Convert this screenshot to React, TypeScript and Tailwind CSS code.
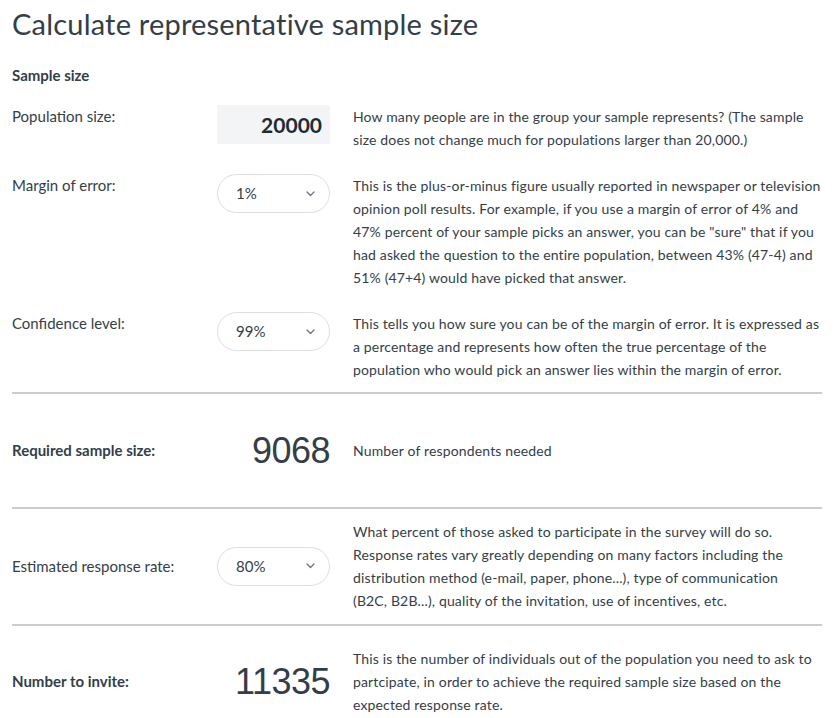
import React from "react";

const font = { fontFamily: "Lato, 'Noto Sans', sans-serif" };

function Chevron() {
    return (
        <svg width="9" height="6" viewBox="0 0 9 6" fill="none" className="text-[#6b7480]">
            <path d="M1 1l3.5 3.5L8 1" stroke="currentColor" strokeWidth="1.3" strokeLinecap="round" strokeLinejoin="round" />
        </svg>
    );
}

function Select({ value }: { value: string }) {
    return (
        <div className="flex h-[39px] w-[113px] items-center justify-between rounded-full border border-[#dedede] bg-white pl-[18px] pr-[14px] text-[15px] text-[#333e48]">
            <span>{value}</span>
            <Chevron />
        </div>
    );
}

function Row({
    label,
    control,
    children,
    bold = false,
    className = "",
}: {
    label: string;
    control: React.ReactNode;
    children: React.ReactNode;
    bold?: boolean;
    className?: string;
}) {
    return (
        <div className={"grid grid-cols-[182px_113px_1fr] gap-x-[23px] " + className}>
            <div className={"text-[15px] leading-[23px] " + (bold ? "font-bold" : "")}>{label}</div>
            <div className="flex justify-end">{control}</div>
            <div className="text-[14px] leading-[23px] tracking-[0.15px]">{children}</div>
        </div>
    );
}

function BigNumber({ value }: { value: string }) {
    return (
        <div
            className="text-[36px] leading-none tracking-[-0.5px] text-[#333e48]"
            style={{ fontFamily: "'Liberation Sans', Arial, sans-serif" }}
        >
            {value}
        </div>
    );
}

export default function App() {
    return (
        <div className="min-h-[718px] bg-white pl-3 pr-4 text-[#333e48]" style={font}>
            <h1 className="pt-[6px] text-[29px] font-normal leading-[36px] tracking-[0.2px]">
                Calculate representative sample size
            </h1>
            <h2 className="mt-[22px] text-[15px] font-bold leading-[23px]">Sample size</h2>

            <div className="mt-[18px] flex flex-col gap-[23px]">
                <Row
                    label="Population size:"
                    control={
                        <div className="flex h-[39px] w-[113px] items-center justify-end rounded-[2px] bg-[#f3f4f6] pr-[8px] text-[21px] font-bold text-[#1f2a33]">
                            20000
                        </div>
                    }
                >
                    How many people are in the group your sample represents? (The sample size does not change much for
                    populations larger than 20,000.)
                </Row>
                <Row label="Margin of error:" control={<Select value="1%" />}>
                    This is the plus-or-minus figure usually reported in newspaper or television opinion poll results. For
                    example, if you use a margin of error of 4% and 47% percent of your sample picks an answer, you can be
                    "sure" that if you had asked the question to the entire population, between 43% (47-4) and 51% (47+4)
                    would have picked that answer.
                </Row>
                <Row label="Confidence level:" control={<Select value="99%" />}>
                    This tells you how sure you can be of the margin of error. It is expressed as a percentage and represents
                    how often the true percentage of the population who would pick an answer lies within the margin of error.
                </Row>
            </div>

            <div className="mt-[11px] h-[2px] bg-[#cccccc]" />

            <Row
                label="Required sample size:"
                bold
                control={<BigNumber value="9068" />}
                className="h-[113px] items-center"
            >
                Number of respondents needed
            </Row>

            <div className="h-[2px] bg-[#cccccc]" />

            <Row
                label="Estimated response rate:"
                control={<Select value="80%" />}
                className="items-center pb-[12px] pt-[11px]"
            >
                What percent of those asked to participate in the survey will do so. Response rates vary greatly depending
                on many factors including the distribution method (e-mail, paper, phone...), type of communication
                <br />
                (B2C, B2B...), quality of the invitation, use of incentives, etc.
            </Row>

            <div className="h-[2px] bg-[#cccccc]" />

            <Row label="Number to invite:" bold control={<BigNumber value="11335" />} className="items-center pt-[21px]">
                This is the number of individuals out of the population you need to ask to partcipate, in order to achieve
                the required sample size based on the expected response rate.
            </Row>
        </div>
    );
}
